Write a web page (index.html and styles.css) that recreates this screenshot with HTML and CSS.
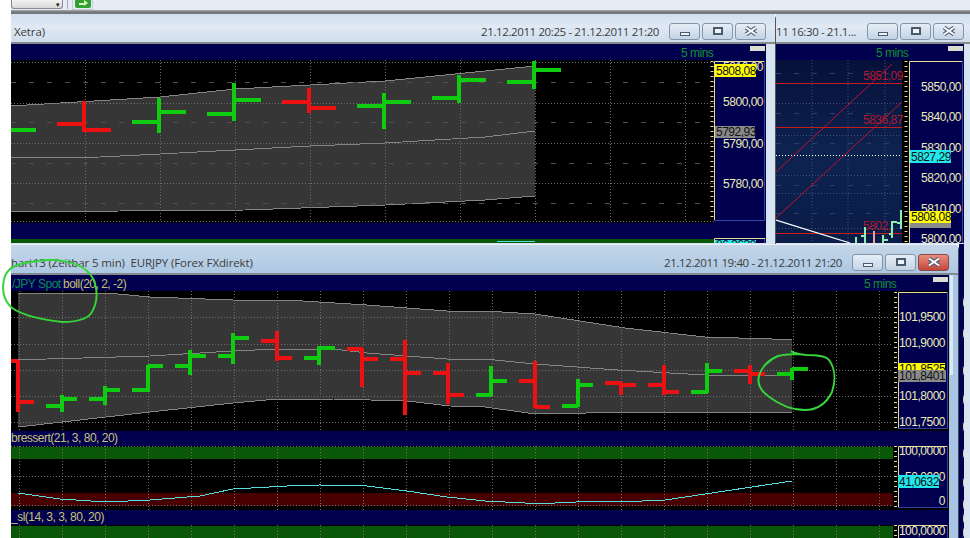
FILE: index.html
```html
<!DOCTYPE html>
<html lang="de">
<head>
<meta charset="utf-8">
<title>Charts</title>
<link rel="stylesheet" href="styles.css">
</head>
<body>
<div class="desktop">
  <div class="toolbar">
    <div class="combo"><span class="combo-arrow">▾</span></div>
    <div class="sep"></div>
    <div class="go"><svg width="16" height="8" viewBox="0 0 16 8"><path class="go-arrow" d="M4 3h5V0l4 3-4 3V5H4z"/></svg></div>
  </div>

  <aside class="edge">
    <i class="mark m1"></i><i class="mark m2"></i><i class="mark m3"></i><i class="mark m4"></i><i class="mark m5"></i><i class="mark m6"></i><i class="mark m7"></i><i class="mark m8"></i><i class="mark m9"></i><i class="mark m10"></i>
  </aside>

  <section class="win win-back">
    <header class="title">
      <span class="date">11 16:30 - 21.1...</span>
      <div class="btns">
        <button class="b"><i class="min"></i></button><button class="b"><i class="max"></i></button>
        <button class="b"><svg class="xi" width="14" height="10" viewBox="0 0 14 10"><path class="xo" d="M2 1.500L12 8.500M12 1.500L2 8.500"/><path class="xw" d="M2 1.500L12 8.500M12 1.500L2 8.500"/></svg></button>
      </div>
    </header>
    <svg class="chart" width="194" height="199" viewBox="776 44 194 199">
      <defs><linearGradient id="bg" x1="0" y1="0" x2="0" y2="1"><stop offset="0" stop-color="#06103a"/><stop offset=".5" stop-color="#0e2350"/><stop offset="1" stop-color="#0a1c48"/></linearGradient></defs>
      <rect class="navy" x="776" y="44" width="188" height="199"/>
      <rect fill="url(#bg)" x="776" y="60" width="126" height="183"/>
      <rect class="black" x="902" y="60" width="7" height="183"/>
      <rect class="bar-white" x="948" y="46" width="15" height="5"/>
      <text class="mins" x="876" y="57">5 mins</text>
      <g class="griddim">
        <path d="M812 60V243M848 60V243M885 60V243"/>
        <path d="M776 103.500H902M776 135.500H902M776 175.500H902M776 193.500H902M776 228.500H902"/>
      </g>
      <path class="griddimdash" d="M776 73.500H902M776 113.500H902M776 143.500H902M776 185.500H902M776 213.500H902"/>
      <path class="frame" d="M909.500 243V61.500H963"/>
      <path class="frame-blue" d="M962.500 61V243"/>
      <path class="ticks" d="M906 61V243"/>
      <path class="redline" d="M776 83.500H902M776 127.500H902M776 233.500H902"/>
      <path class="reddiag" d="M776 172L892 64M776 218L902 102"/>
      <text class="redtxt" x="863" y="80">5851,09</text>
      <text class="redtxt" x="863" y="124">5836,87</text>
      <text class="redtxt" x="863" y="230">5802,</text>
      <path class="wdot" d="M776 155.500H900"/>
      <path class="wline" d="M776 220L850 243"/>
      <path class="lg" d="M856 243V237M865 243V227M865 236H861M883 243V235M883 240H888M892 238V221M889 234H892M892 222H897M901 229V210M897 223H901"/>
      <path class="lp" d="M874 243V231"/>
      <g class="axis">
        <text x="961" y="91">5850,00</text><text x="961" y="121">5840,00</text><text x="961" y="152">5830,00</text><text x="961" y="182">5820,00</text><text x="961" y="213">5810,00</text><text x="961" y="243">5800,00</text>
      </g>
      <rect class="tag-grey" x="910" y="220" width="41" height="8"/>
      <rect class="tag-cyan" x="910" y="150" width="41" height="13"/><text class="tagtxt" x="911" y="161">5827,29</text>
      <rect class="tag-yellow" x="910" y="211" width="41" height="12"/><text class="tagtxt" x="911" y="221">5808,08</text>
    </svg>
  </section>

  <section class="win win-mid">
    <header class="title">
      <span class="name">Xetra)</span>
      <span class="date">21.12.2011 20:25 - 21.12.2011 21:20</span>
      <div class="btns">
        <button class="b"><i class="min"></i></button><button class="b"><i class="max"></i></button>
        <button class="b"><svg class="xi" width="14" height="10" viewBox="0 0 14 10"><path class="xo" d="M2 1.500L12 8.500M12 1.500L2 8.500"/><path class="xw" d="M2 1.500L12 8.500M12 1.500L2 8.500"/></svg></button>
      </div>
    </header>
    <svg class="chart" width="755" height="199" viewBox="11 44 755 199">
      <rect class="navy" x="11" y="44" width="755" height="199"/>
      <rect class="black" x="11" y="60" width="703" height="163"/>
      <rect class="dkgreen" x="11" y="239" width="703" height="4"/>
      <rect class="bar-white" x="750" y="46" width="15" height="5"/>
      <text class="mins" x="681" y="57">5 mins</text>
      <polygon class="band" points="11,106 160,97 235,89 385,81 485,71 535,66 535,196 485,200 385,205 245,210 120,211 11,212"/>
      <polyline class="bline" points="11,106 160,97 235,89 385,81 485,71 535,66"/>
      <polyline class="bline" points="11,212 120,211 245,210 385,205 485,200 535,196"/>
      <polyline class="bline" points="11,158 100,157 160,154 235,150 310,146 385,143 485,137 535,131"/>
      <path class="grid" d="M85.500 60V221M160.500 60V221M235.500 60V221M310.500 60V221M385.500 60V221M460.500 60V221M535.500 60V221M610.500 60V221M685.500 60V221"/>
      <path class="grid" d="M11 62.500H714M11 103.500H714M11 143.500H714M11 183.500H714M11 221.500H714"/>
      <path class="griddash" d="M11 82.500H714M11 122.500H714M11 163.500H714M11 203.500H714"/>
      <path class="cyan" d="M497 241.500H535"/>
      <path class="up" d="M11 130H36"/>
      <path class="dn" d="M84 101V132M57 124H84M84 130H111"/>
      <path class="up" d="M159 98V133M132 122H159M159 112H186"/>
      <path class="up" d="M234 83V121M207 114H234M234 100H261"/>
      <path class="dn" d="M309 88V113M282 102H309M309 108H336"/>
      <path class="up" d="M384 93V129M357 106H384M384 102H411"/>
      <path class="up" d="M459 75V103M432 98H459M459 80H486"/>
      <path class="up" d="M534 61V89M507 82H534M534 70H561"/>
      <path class="frame" d="M714.500 220V61.500H765M714.500 243V238.500H765"/>
      <path class="frame-blue" d="M764.500 61V220.500H714M764.500 239V243"/>
      <path class="ticks" d="M712 61V220"/>
      <g class="axis">
        <text x="763" y="71">5810,00</text><text x="763" y="106">5800,00</text><text x="763" y="148">5790,00</text><text x="763" y="188">5780,00</text>
      </g>
      <rect class="tag-yellow" x="715" y="64" width="41" height="13"/><text class="tagtxt" x="716" y="75">5808,08</text>
      <rect class="tag-grey" x="715" y="126" width="40" height="12"/><text class="tagtxt" x="716" y="136">5792,93</text>
      <rect class="tag-cyan" x="715" y="240" width="41" height="3"/><text class="tagtxt" x="716" y="249">86,3639</text>
    </svg>
  </section>

  <section class="win win-front">
    <header class="title">
      <span class="name">hart13 (Zeitbar 5 min)&nbsp; EURJPY (Forex FXdirekt)</span>
      <span class="date">21.12.2011 19:40 - 21.12.2011 21:20</span>
      <div class="btns">
        <button class="b"><i class="min"></i></button><button class="b"><i class="max"></i></button>
        <button class="b b-close"><svg class="xi" width="14" height="10" viewBox="0 0 14 10"><path class="xo" d="M2 1.500L12 8.500M12 1.500L2 8.500"/><path class="xw" d="M2 1.500L12 8.500M12 1.500L2 8.500"/></svg></button>
      </div>
    </header>
    <svg class="chart" width="938" height="264" viewBox="11 274 938 264">
      <rect class="navy" x="11" y="274" width="938" height="264"/>
      <rect class="black" x="11" y="290" width="938" height="140"/>
      <rect class="black" x="11" y="445" width="938" height="64"/>
      <rect class="black" x="11" y="524" width="938" height="14"/>
      <rect class="dkgreen" x="11" y="446" width="882" height="12"/>
      <rect class="dkred" x="11" y="492" width="882" height="13"/>
      <rect class="dkgreen" x="11" y="525" width="882" height="13"/>
      <rect class="navy" x="898" y="291" width="50" height="137"/>
      <rect class="navy" x="898" y="445" width="50" height="62"/>
      <rect class="navy" x="898" y="524" width="50" height="14"/>
      <rect class="bar-white" x="933" y="276" width="15" height="5"/>
      <text class="mins" x="864" y="287">5 mins</text>
      <text class="lab-g" x="12" y="287">/JPY Spot</text>
      <text class="lab-y" x="63" y="287">boll(20, 2, -2)</text>
      <text class="lab-y" x="11" y="441">bressert(21, 3, 80, 20)</text>
      <text class="lab-y" x="11" y="520">_sl(14, 3, 3, 80, 20)</text>
      <polygon class="band" points="18,292 107,292 150,296 233,299 287,299 367,304 447,310 485,310 535,313 625,327 705,336 772,338 792,338 792,411 618,411 555,413 528,412 485,406 450,405 407,400 333,398 277,398 233,402 150,411 18,426"/>
      <polyline class="bline" points="18,292 107,292 150,296 233,299 287,299 367,304 447,310 485,310 535,313 625,327 705,336 772,338 792,338"/>
      <polyline class="bline" points="18,426 150,411 233,402 277,398 333,398 407,400 450,405 485,406 528,412 555,413 618,411 792,411"/>
      <polyline class="bline" points="11,359 83,357 150,355 233,350 277,348 333,348 367,352 447,358 485,358 535,363 618,369 705,374 792,374"/>
      <path class="grid" d="M19.500 290V430M62.500 290V430M105.500 290V430M148.500 290V430M191.500 290V430M234.500 290V430M277.500 290V430M320.500 290V430M363.500 290V430M406.500 290V430M449.500 290V430M492.500 290V430M535.500 290V430M578.500 290V430M621.500 290V430M664.500 290V430M707.500 290V430M750.500 290V430M793.500 290V430M836.500 290V430M879.500 290V430"/>
      <path class="grid" d="M11 316.500H893M11 343.500H893M11 369.500H893M11 395.500H893M11 421.500H893"/>
      <path class="grid" d="M19.500 445V509M62.500 445V509M105.500 445V509M148.500 445V509M191.500 445V509M234.500 445V509M277.500 445V509M320.500 445V509M363.500 445V509M406.500 445V509M449.500 445V509M492.500 445V509M535.500 445V509M578.500 445V509M621.500 445V509M664.500 445V509M707.500 445V509M750.500 445V509M793.500 445V509M836.500 445V509M879.500 445V509"/>
      <path class="grid" d="M11 445.500H893M11 475.500H893M11 504.500H893"/>
      <path class="grid" d="M19.500 524V538M62.500 524V538M105.500 524V538M148.500 524V538M191.500 524V538M234.500 524V538M277.500 524V538M320.500 524V538M363.500 524V538M406.500 524V538M449.500 524V538M492.500 524V538M535.500 524V538M578.500 524V538M621.500 524V538M664.500 524V538M707.500 524V538M750.500 524V538M793.500 524V538M836.500 524V538M879.500 524V538"/>
      <path class="dn" d="M18 359V411M11 360H18M18 401H34"/>
      <path class="up" d="M62 394V411M46 405H62M62 398H77"/>
      <path class="up" d="M105 385V404M89 398H105M105 389H120"/>
      <path class="up" d="M148 364V391M132 389H148M148 365H163"/>
      <path class="up" d="M190 349V374M175 365H190M190 355H206"/>
      <path class="up" d="M233 332V363M218 355H233M233 337H249"/>
      <path class="dn" d="M277 330V360M261 340H277M277 357H292"/>
      <path class="up" d="M319 345V364M304 357H319M319 347H335"/>
      <path class="dn" d="M362 347V386M347 348H362M362 358H378"/>
      <path class="dn" d="M405 339V414M390 358H405M405 372H421"/>
      <path class="dn" d="M448 362V403M433 372H448M448 394H464"/>
      <path class="up" d="M491 365V395M476 394H491M491 380H507"/>
      <path class="dn" d="M535 360V407M519 380H535M535 406H550"/>
      <path class="up" d="M578 378V406M562 405H578M578 384H593"/>
      <path class="dn" d="M621 381V394M605 382H621M621 384H636"/>
      <path class="dn" d="M664 364V394M648 384H664M664 391H679"/>
      <path class="up" d="M707 362V392M691 391H707M707 370H722"/>
      <path class="dn" d="M750 364V383M734 370H750M750 373H765"/>
      <path class="up" d="M792 367V379M777 373H792M792 368H808"/>
      <polyline class="cyan" points="18,492 60,498 107,501 150,499 200,495 233,488 287,485 320,484 367,485 407,490 447,496 485,500 525,502 555,502 598,500 642,500 665,499 792,480"/>
      <path class="frame" d="M898.500 428V291.500H948M898.500 506V445.500H948M898.500 538V524.500H948"/>
      <path class="frame-blue" d="M947.500 291V427.500H898M947.500 445V506.500H898M947.500 524V538"/>
      <path class="ticks" d="M895.500 291V428M895.500 445V506M895.500 524V538"/>
      <g class="axis">
        <text x="945" y="320">101,9500</text><text x="945" y="346">101,9000</text><text x="945" y="399">101,8000</text><text x="945" y="425">101,7500</text>
        <text x="945" y="454">100,0000</text><text x="945" y="480">50,0000</text><text x="945" y="504">0</text><text x="945" y="534">100,0000</text>
      </g>
      <rect class="tag-yellow" x="898" y="362" width="47" height="12"/><text class="tagtxt" x="899" y="372">101,8525</text>
      <rect class="tag-grey" x="898" y="369" width="48" height="12"/><text class="tagtxt" x="899" y="379">101,8401</text>
      <rect class="tag-cyan" x="898" y="474" width="41" height="13"/><text class="tagtxt" x="899" y="485">41,0632</text>
    </svg>
  </section>

  <svg class="scribble" width="970" height="538" viewBox="0 0 970 538">
    <path d="M86 270C76 262 56 258 38 261C20 263 9 266 5 276C1 288 3 300 12 308C24 316 44 320 62 322C78 322 90 318 93 310C99 298 98 280 86 270"/>
    <path d="M791 351C794 354 800 354 806 355C816 355 826 356 829 360C835 368 836 380 832 392C826 404 816 410 805 410C792 410 778 404 768 396C760 390 757 384 759 376C761 368 768 360 778 356C786 354 794 354 800 354"/>
  </svg>
</div>
</body>
</html>
```
FILE: styles.css
```css
* { box-sizing: border-box; }
html, body { margin: 0; padding: 0; }
body { background: #fff; font-family: "Open Sans", "Liberation Sans", sans-serif; overflow: hidden; }
.desktop { position: relative; width: 970px; height: 538px; overflow: hidden; background: #fff; }

.toolbar { position: absolute; left: 11px; top: 0; width: 959px; height: 14px; display: flex; align-items: flex-start; gap: 3px; background: linear-gradient(#e6ecf5 0 10px, #a8abb0 10px, #74787c 12px, #74787c 14px); }
.combo { width: 52px; height: 9px; background: linear-gradient(#f2f2f2, #d9d9d9); border: 1px solid #8b8b8b; border-top: 0; border-radius: 0 0 3px 3px; display: flex; justify-content: flex-end; align-items: flex-end; }
.combo-arrow { font-size: 7px; line-height: 7px; color: #111; margin-right: 2px; }
.sep { width: 2px; height: 9px; margin-left: 1px; border-left: 1px solid #aaa; }
.go { width: 21px; height: 10px; padding: 0 2px; border: 1px solid #c7ccd3; border-top: 0; }
.go svg { display: block; background: #2ea12e; border-radius: 0 0 2px 2px; }
.go-arrow { fill: #d8f5c0; }

.win { position: absolute; display: flex; flex-direction: column; background: #d6e3f1; }
.title { height: 30px; flex: none; display: flex; align-items: center; background: linear-gradient(#d2dfee, #e0e9f4 45%, #cfdded); border-bottom: 2px solid #85898e; font-size: 11.500px; color: #3c3c3c; white-space: nowrap; padding-left: 3px; padding-top: 6px; }
.name { flex: 1 1 auto; letter-spacing: -.12px; }
.date { letter-spacing: -.39px; margin-right: 10px; }
.btns { display: flex; gap: 2px; }
.b { width: 31px; height: 17px; padding: 0; border: 1px solid #8595a8; border-radius: 3px; background: linear-gradient(#e6eef7, #c3d3e5); display: flex; align-items: center; justify-content: center; }
.b-close { background: linear-gradient(#e88d80, #c2473a); border-color: #8a4a44; }
.b i { display: block; font-style: normal; }
.min { width: 10px; height: 4px; margin-top: 6px; border: 1px solid #4a5a6c; background: #eef3f8; }
.max { width: 10px; height: 8px; border: 2px solid #4a5a6c; background: #eef3f8; }
.xi { display: block; }
.xo { fill: none; stroke: #4a5a6c; stroke-width: 4; }
.xw { fill: none; stroke: #fff; stroke-width: 2; }

.win-back { left: 776px; top: 14px; width: 194px; height: 230px; }
.win-back .title { padding-left: 0; }
.win-back .date { flex: 1; margin-right: 0; }
.win-back .btns { margin-right: 6px; }
.win-mid { left: 11px; top: 14px; width: 765px; height: 230px; border-right: 1px solid #555; border-top-right-radius: 5px; background: #d6e3f1; }
.win-mid .title { padding-right: 9px; }
.win-front { left: 11px; top: 244px; width: 948px; height: 294px; border-top: 1px solid #e8eef5; border-right: 1px solid #3a4a60; border-top-right-radius: 6px; background: linear-gradient(90deg, #a9c5e3 0 2px, #dbe8f6 2px 5px, #a9c5e3 5px) right top / 10px 130px no-repeat, #a9c5e3; }
.win-front .title { height: 30px; background: linear-gradient(#c4d6e8, #adc8e3); padding-left: 0; padding-right: 9px; }
.chart { display: block; flex: none; }

.edge { position: absolute; left: 959px; top: 44px; width: 11px; height: 494px; background: #d6e3f1; border-left: 5px solid #00004e; }
.mark { position: absolute; left: -3px; width: 3px; height: 9px; border-right: 1px solid #d8d8a8; border-radius: 0 50% 50% 0; }
.m1 { top: 254px; } .m2 { top: 285px; } .m3 { top: 322px; } .m4 { top: 351px; } .m5 { top: 378px; } .m6 { top: 405px; } .m7 { top: 434px; } .m8 { top: 456px; } .m9 { top: 470px; } .m10 { top: 484px; }

.navy { fill: #00004e; }
.black { fill: #000; }
.dkgreen { fill: #085808; }
.dkred { fill: #480000; }
.band { fill: #363636; }
.bline { fill: none; stroke: #858585; stroke-width: 1; shape-rendering: crispEdges; }
.grid { fill: none; stroke: #6e6e6e; stroke-width: 1; stroke-dasharray: 1 2; }
.griddash { fill: none; stroke: #505050; stroke-width: 1; stroke-dasharray: 5 13; }
.griddim { fill: none; stroke: #3a5078; stroke-width: 1; stroke-dasharray: 1 2; }
.griddimdash { fill: none; stroke: #2a3f68; stroke-width: 1; stroke-dasharray: 5 13; }
.up, .dn { fill: none; stroke-width: 4; }
.up { stroke: #10cc10; }
.dn { stroke: #ee1111; }
.cyan { fill: none; stroke: #55dddd; stroke-width: 1; shape-rendering: crispEdges; }
.frame { fill: none; stroke: #e8dc90; stroke-width: 1; }
.frame-blue { fill: none; stroke: #3344a0; stroke-width: 1; }
.ticks { fill: none; stroke: #e8dc90; stroke-width: 3; stroke-dasharray: 1 4; }
.redline { fill: none; stroke: #c81c1c; stroke-width: 1; }
.reddiag { fill: none; stroke: #c01030; stroke-width: 1; }
.wdot { fill: none; stroke: #fff; stroke-width: 1; stroke-dasharray: 1 2; }
.wline { fill: none; stroke: #fff; stroke-width: 1.200; }
.lg { fill: none; stroke: #90ecb0; stroke-width: 2; }
.lp { fill: none; stroke: #e8a0b0; stroke-width: 2; }
.bar-white { fill: #dcdcd0; }

text { font-family: "Liberation Sans", Arial, sans-serif; font-size: 12px; letter-spacing: -.5px; }
.mins { fill: #109030; }
.axis text { fill: #ecebb8; text-anchor: end; }
.redtxt { fill: #b01830; }
.lab-g { fill: #108858; }
.lab-y { fill: #c8c078; }
.tagtxt { fill: #111; }
.tag-yellow { fill: #ffff00; }
.tag-grey { fill: #8a8a8a; }
.tag-cyan { fill: #22e8ee; }

.scribble { position: absolute; left: 0; top: 0; pointer-events: none; }
.scribble path { fill: none; stroke: #36d43a; stroke-width: 2; }
```
